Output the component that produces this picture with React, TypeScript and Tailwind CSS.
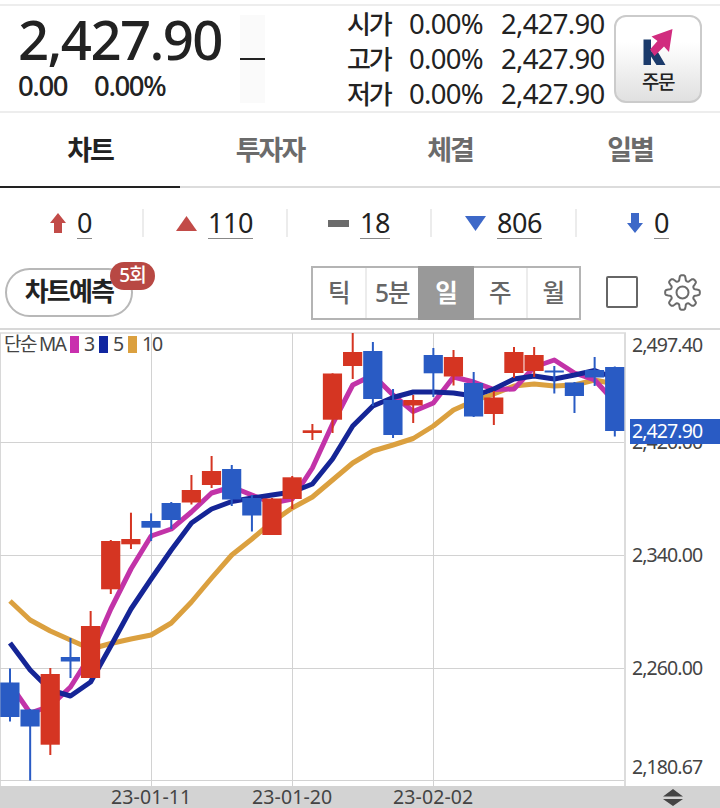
import React from "react";
import clsx from "clsx";

type Candle = {
  up: boolean;
  high: number;
  top: number;
  bottom: number;
  low: number;
};

const STEP = 20.16;
const CHART_TOP = 330;

const up = (high: number, top: number, bottom: number, low: number): Candle => ({ up: true, high, top, bottom, low });
const down = (high: number, top: number, bottom: number, low: number): Candle => ({ up: false, high, top, bottom, low });

const candles: Candle[] = [
  down(668.5, 682.5, 717, 721.5),
  down(709, 709.5, 726.5, 780.5),
  up(668, 674, 744.7, 755),
  down(638, 657, 661.5, 678),
  up(611, 626, 678, 678),
  up(540, 541, 589.3, 594),
  up(512.7, 539, 544.3, 549),
  down(513.3, 521, 527.7, 541),
  down(502, 503, 520, 529),
  up(475, 490, 502.5, 504.5),
  up(456, 471, 485, 488),
  down(465, 469, 499.5, 506),
  down(495, 498, 515.5, 531.5),
  up(498, 498.5, 535, 535),
  up(476, 477.3, 499, 509),
  up(424, 430.3, 433, 440),
  up(373.3, 373.5, 419.7, 433),
  up(333, 352, 366, 379),
  down(342, 351, 399, 406),
  down(389, 400, 435, 438),
  up(395, 400, 405.5, 423),
  down(348, 355, 373.3, 397),
  up(350, 357, 376.5, 385.5),
  down(372, 383, 416.5, 417),
  up(391, 397.5, 414, 425),
  up(347, 352, 373, 378),
  up(347, 355, 371, 377),
  down(366, 370.5, 372.5, 393.5),
  down(382, 382.5, 396, 413),
  down(357, 370, 377.5, 386),
  down(366.5, 367, 431, 436.5),
];

const ma3 = [684, 713, 706, 687, 655, 609, 569, 536, 529, 512, 493, 487, 495, 503, 499, 468, 424, 385, 375, 395, 411.5, 403, 377, 382, 389.5, 389, 367, 360, 373, 380, 402];
const ma5 = [643, 670, 690, 696, 682, 646, 609, 579, 550, 523, 509, 501.5, 498, 495, 492, 484, 459, 426, 406, 397.5, 392, 392, 393, 396, 389, 379, 376, 379, 375, 370.5, 378];
const ma10 = [601, 620, 631, 640, 649, 643.5, 639, 635, 623, 602, 578, 555, 539, 522, 508, 497, 480, 463, 451, 445, 438.5, 426, 410, 401, 394, 386, 384, 386, 385, 380, 384];

const xOf = (i: number) => 10 + i * STEP;
const toPoints = (values: number[]) =>
  values.map((v, i) => `${xOf(i)},${v - CHART_TOP}`).join(" ");

const quotes = [
  { label: "시가", rate: "0.00%", price: "2,427.90" },
  { label: "고가", rate: "0.00%", price: "2,427.90" },
  { label: "저가", rate: "0.00%", price: "2,427.90" },
];

const tabs = ["차트", "투자자", "체결", "일별"];
const periods = ["틱", "5분", "일", "주", "월"];
const dates = ["23-01-11", "23-01-20", "23-02-02"];

function OrderLogo() {
  return (
    <svg width="30" height="37" viewBox="0 0 30 37" className="block">
      <path d="M0.500 10.500h7.500V22l3 2 3-2.500L22.500 36h-9L8 27.500V36H0.500z" fill="#1b3a6b" />
      <path d="M29.500 0 26 23 21 17.500 11.500 27 7 20.500 14.500 12 8.500 7.500z" fill="#d12c7f" />
    </svg>
  );
}

function GearIcon() {
  // 8 rounded teeth around the hub
  const pts: string[] = [];
  for (let a = 0; a < 360; a += 3) {
    const wave = Math.tanh(2 * Math.cos((a * 8 * Math.PI) / 180) + 0.2);
    const r = 14.6 + 2.8 * wave;
    const t = (a * Math.PI) / 180;
    pts.push(`${(18.5 + r * Math.cos(t)).toFixed(2)},${(18.5 + r * Math.sin(t)).toFixed(2)}`);
  }
  return (
    <svg width="37" height="37" viewBox="0 0 37 37" fill="none" stroke="#6b6b6b" strokeWidth="2" strokeLinejoin="round">
      <polygon points={pts.join(" ")} />
      <circle cx="18.500" cy="18.500" r="6" />
    </svg>
  );
}

function ArrowIcon({ className }: { className?: string }) {
  return (
    <svg width="16" height="20" viewBox="0 0 16 20" className={className} fill="currentColor">
      <path d="M8 0 16 10h-4v10H4V10H0z" />
    </svg>
  );
}

function TriangleIcon({ className }: { className?: string }) {
  return (
    <svg width="21" height="15" viewBox="0 0 21 15" className={className} fill="currentColor">
      <path d="M10.500 0 21 15H0z" />
    </svg>
  );
}

function Chart() {
  return (
    <svg width="626" height="456" viewBox="0 0 626 456" className="block">
      <g shapeRendering="crispEdges">
        <rect x="0" y="2" width="626" height="2" fill="#e4e4e4" />
        <rect x="0" y="3" width="1" height="453" fill="#d8d8d8" />
        <rect x="151" y="3" width="1" height="453" fill="#d2d2d2" />
        <rect x="292" y="3" width="1" height="453" fill="#d2d2d2" />
        <rect x="433" y="3" width="1" height="453" fill="#d2d2d2" />
        {[112, 225, 338, 450].map((y) => (
          <rect key={y} x="0" y={y} width="625" height="1" fill="#d2d2d2" />
        ))}
        <rect x="624" y="3" width="2" height="453" fill="#dcdcdc" />
      </g>
      <g fill="none" strokeWidth="5" strokeLinejoin="round">
        <polyline points={toPoints(ma10)} stroke="#dba03f" />
        <polyline points={toPoints(ma3)} stroke="#c233a8" />
        <polyline points={toPoints(ma5)} stroke="#152596" />
      </g>
      {candles.map((c, i) => {
        const color = c.up ? "#d53522" : "#295bc4";
        return (
          <g key={i} fill={color}>
            <rect x={xOf(i) - 1} y={c.high - CHART_TOP} width="2" height={c.low - c.high} />
            <rect x={xOf(i) - 9.7} y={c.top - CHART_TOP} width="19.2" height={c.bottom - c.top} />
          </g>
        );
      })}
    </svg>
  );
}

export default function App() {
  return (
    <div className="h-[808px] w-[720px] overflow-hidden bg-white font-['Noto_Sans','Noto_Sans_CJK_KR',sans-serif] text-[#222]">
      {/* PRICE HEADER */}
      <header className="mt-1 flex h-[109px] border-y-2 border-[#ededed]">
        <div className="w-[240px] shrink-0 pl-[18px] whitespace-nowrap">
          <div className="mt-[5px] h-[59px] text-[54.500px] leading-[56px] font-medium tracking-[-1.600px]">2,427.90</div>
          <div className="flex h-8 gap-[27px] text-[27.500px] leading-8 font-medium tracking-[-1.400px]">
            <span>0.00</span>
            <span>0.00%</span>
          </div>
        </div>

        <div className="mt-[9px] h-[88px] w-[25px] shrink-0 bg-[#fafafa] pt-[43px]">
          <div className="h-[2px] bg-[#222]" />
        </div>

        <div className="ml-[82px] w-[259px] shrink-0">
          {quotes.map((q) => (
            <div key={q.label} className="flex h-[35px] items-center text-[27.500px] leading-[35px] tracking-[-0.700px] whitespace-nowrap">
              <span className="w-[62px] pt-px text-[26px] font-medium tracking-[-2.200px]">{q.label}</span>
              <span className="w-[92px]">{q.rate}</span>
              <span>{q.price}</span>
            </div>
          ))}
        </div>

        <button
          type="button"
          className="mt-[9px] ml-[8px] flex h-[88px] w-[88px] flex-col items-center rounded-xl border-2 border-[#cbcbcb] bg-linear-to-b from-white from-30% to-[#e0e0e0] pt-3"
        >
          <OrderLogo />
          <span className="mt-[4px] text-[19px] leading-6 font-medium tracking-[-1.500px]">주문</span>
        </button>
      </header>

      {/* TABS */}
      <nav className="grid h-[75px] grid-cols-4">
        {tabs.map((tab, i) => (
          <div
            key={tab}
            className={clsx(
              "flex items-center justify-center border-b-2 pt-[2px] text-[27px] font-bold tracking-[-2px]",
              i === 0 ? "border-[#222] text-[#222]" : "border-[#dcdcdc] text-[#6b6b6b]"
            )}
          >
            {tab}
          </div>
        ))}
      </nav>

      {/* MARKET BREADTH */}
      <div className="flex h-[70px] items-center text-[27px] leading-[31px] tracking-[-0.500px]">
        <div className="flex h-7 w-[144px] items-center border-r-2 border-[#ececec] pl-[50px]">
          <ArrowIcon className="text-[#c24b48]" />
          <span className="ml-[11px] border-b border-[#888]">0</span>
        </div>
        <div className="flex h-7 w-[144px] items-center border-r-2 border-[#ececec] pl-8">
          <TriangleIcon className="text-[#c24b48]" />
          <span className="ml-[11px] border-b border-[#888]">110</span>
        </div>
        <div className="flex h-7 w-[144px] items-center border-r-2 border-[#ececec] pl-10">
          <span className="h-[7px] w-[21px] bg-[#6b6b6b]" />
          <span className="ml-[11px] border-b border-[#888]">18</span>
        </div>
        <div className="flex h-7 w-[145px] items-center border-r-2 border-[#ececec] pl-[33px]">
          <TriangleIcon className="rotate-180 text-[#3d68c8]" />
          <span className="ml-[11px] border-b border-[#888]">806</span>
        </div>
        <div className="flex h-7 items-center pl-[50px]">
          <ArrowIcon className="rotate-180 text-[#3d68c8]" />
          <span className="ml-[11px] border-b border-[#888]">0</span>
        </div>
      </div>

      {/* TOOLBAR */}
      <div className="flex h-[72px] items-start border-b-2 border-[#d8d8d8] pt-2">
        <div className="relative mt-[2px] ml-[5px] flex h-[49px] w-[128px] items-center justify-center rounded-full border-2 border-[#b8b8b8] pb-[2px] text-[26px] font-bold tracking-[-1.800px] whitespace-nowrap">
          차트예측
          <span className="absolute -top-[8px] left-[103px] flex h-7 w-[45px] items-center justify-center rounded-full bg-[#b84843] pb-[2px] text-[19px] font-medium tracking-[-1px] text-white">
            5회
          </span>
        </div>

        <div className="ml-[178px] flex h-[54px] w-[270px] border-2 border-[#b4b4b4] text-[24.500px] font-medium tracking-[-1px] text-[#666]">
          {periods.map((p) => (
            <div
              key={p}
              className={clsx(
                "flex items-center justify-center",
                p === "일" ? "-my-[2px] w-14 bg-[#999] font-bold text-white" : "flex-1",
                (p === "틱" || p === "주") && "border-r-2 border-[#ececec]"
              )}
            >
              {p}
            </div>
          ))}
        </div>

        <div className="mt-[10px] ml-[25px] size-8 rounded-[2px] border-2 border-[#666]" />
        <div className="mt-2 ml-[26px]">
          <GearIcon />
        </div>
      </div>

      {/* CHART */}
      <div className="relative flex h-[456px]">
        <Chart />
        <div className="absolute top-[2px] left-1 flex h-6 items-center text-[19.500px] leading-6 tracking-[-1.300px] text-[#444]">
          <span className="w-[66px] text-[19px] tracking-[-1.600px] whitespace-nowrap">단순 MA</span>
          <i className="h-[17px] w-[9px] bg-[#c92fae]" />
          <span className="w-5 pl-[5px]">3</span>
          <i className="h-[17px] w-[9px] bg-[#1026a0]" />
          <span className="w-5 pl-[5px]">5</span>
          <i className="h-[17px] w-[9px] bg-[#dba03f]" />
          <span className="pl-[5px] tracking-[-1.200px]">10</span>
        </div>
        <div className="flex flex-col pl-[6px] text-[19.500px] leading-6 tracking-[-0.900px] text-[#444]">
          <span className="mt-[3px]">2,497.40</span>
          <span className="mt-[73px]">2,420.00</span>
          <span className="mt-[89px]">2,340.00</span>
          <span className="mt-[89px]">2,260.00</span>
          <span className="mt-[75px]">2,180.67</span>
        </div>
        <div className="absolute top-[89px] left-[630px] flex h-[25px] w-[90px] items-center bg-[#295bc4] pb-[2px] pl-[2px] text-[19.500px] leading-6 tracking-[-0.900px] text-white">
          2,427.90
        </div>
      </div>

      {/* DATE AXIS */}
      <footer className="flex h-[22px] items-center bg-[#d3d3d3] pl-[111px] text-[19.500px] leading-[22px] tracking-[0.100px] text-[#444]">
        {dates.map((d) => (
          <span key={d} className="w-[141px] whitespace-nowrap">{d}</span>
        ))}
        <svg width="20" height="17" viewBox="0 0 20 17" className="ml-[129px]" fill="#444">
          <path d="M10 0 20 7.500H0zM0 10h20l-10 7z" />
        </svg>
      </footer>
    </div>
  );
}
